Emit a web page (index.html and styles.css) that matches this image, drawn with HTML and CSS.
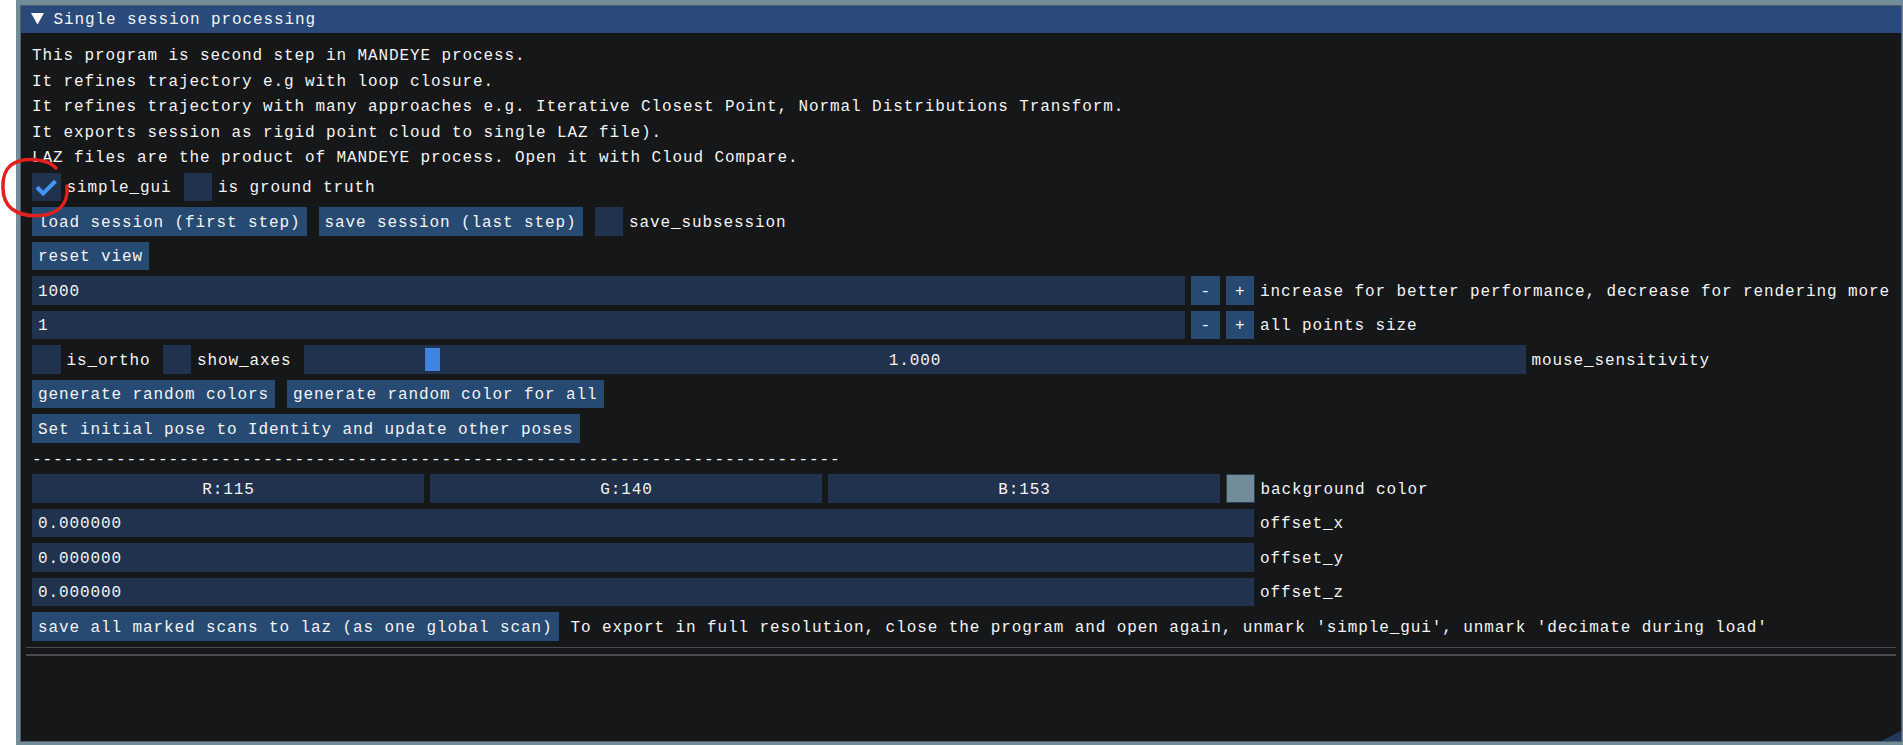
FILE: index.html
```html
<!DOCTYPE html>
<html lang="en">
<head>
<meta charset="utf-8">
<title>Single session processing</title>
<link rel="stylesheet" href="styles.css">
</head>
<body>
<div class="screen">
  <div class="gutter"></div>
  <div class="desktop">
    <div class="window">
      <div class="titlebar">
        <svg class="arrow" viewBox="0 0 13 12" width="13" height="12"><polygon points="0,0 13,0 6.5,11.5" fill="#ffffff"/></svg>
        <span class="title">Single session processing</span>
      </div>
      <div class="content">
        <div class="text">This program is second step in MANDEYE process.</div>
        <div class="text">It refines trajectory e.g with loop closure.</div>
        <div class="text">It refines trajectory with many approaches e.g. Iterative Closest Point, Normal Distributions Transform.</div>
        <div class="text">It exports session as rigid point cloud to single LAZ file).</div>
        <div class="text">LAZ files are the product of MANDEYE process. Open it with Cloud Compare.</div>

        <div class="row">
          <div class="item">
            <span class="check"><svg viewBox="0 0 28.5 28.5" width="28.5" height="28.5"><polyline points="5.03,14.25 11.18,20.4 23.48,8.1" fill="none" stroke="#4296fa" stroke-width="4.1"/></svg></span>
            <span class="label">simple_gui</span>
          </div>
          <div class="item">
            <span class="check"></span>
            <span class="label">is ground truth</span>
          </div>
        </div>

        <div class="row">
          <span class="btn">load session (first step)</span>
          <span class="btn">save session (last step)</span>
          <div class="item">
            <span class="check"></span>
            <span class="label">save_subsession</span>
          </div>
        </div>

        <div class="row">
          <span class="btn">reset view</span>
        </div>

        <div class="row tight">
          <span class="field int">1000</span>
          <span class="btn sq">-</span>
          <span class="btn sq">+</span>
          <span class="label">increase for better performance, decrease for rendering more</span>
        </div>

        <div class="row tight">
          <span class="field int">1</span>
          <span class="btn sq">-</span>
          <span class="btn sq">+</span>
          <span class="label">all points size</span>
        </div>

        <div class="row">
          <div class="item">
            <span class="check"></span>
            <span class="label">is_ortho</span>
          </div>
          <div class="item">
            <span class="check"></span>
            <span class="label">show_axes</span>
          </div>
          <div class="item">
            <span class="slider"><span class="grab"></span><span class="slider-value">1.000</span></span>
            <span class="label">mouse_sensitivity</span>
          </div>
        </div>

        <div class="row">
          <span class="btn">generate random colors</span>
          <span class="btn">generate random color for all</span>
        </div>

        <div class="row">
          <span class="btn">Set initial pose to Identity and update other poses</span>
        </div>

        <div class="text">-----------------------------------------------------------------------------</div>

        <div class="row tight">
          <span class="field comp">R:115</span>
          <span class="field comp">G:140</span>
          <span class="field comp">B:153</span>
          <span class="swatch"></span>
          <span class="label">background color</span>
        </div>

        <div class="row tight">
          <span class="field wide">0.000000</span>
          <span class="label">offset_x</span>
        </div>
        <div class="row tight">
          <span class="field wide">0.000000</span>
          <span class="label">offset_y</span>
        </div>
        <div class="row tight">
          <span class="field wide">0.000000</span>
          <span class="label">offset_z</span>
        </div>

        <div class="row">
          <span class="btn">save all marked scans to laz (as one global scan)</span>
          <span class="label">To export in full resolution, close the program and open again, unmark 'simple_gui', unmark 'decimate during load'</span>
        </div>

        <div class="sep"></div>
        <div class="sep"></div>
      </div>
      <div class="grip"></div>
    </div>
  </div>
  <svg class="annotation" width="1903" height="745" viewBox="0 0 1903 745">
    <path d="M 56 168 C 48 159, 24 156, 11 165 C 0 174, 0 200, 12 209 C 24 218, 48 218, 59 209 C 66 203, 68 195, 67 186" fill="none" stroke="#e3201b" stroke-width="3.5" stroke-linecap="round" stroke-linejoin="round"/>
  </svg>
</div>
</body>
</html>
```

FILE: styles.css
```css
* {
  box-sizing: border-box;
}

html,
body {
  margin: 0;
  padding: 0;
  background: #ffffff;
}

body {
  width: 1903px;
  height: 745px;
  overflow: hidden;
  font-family: "Liberation Mono", "DejaVu Sans Mono", monospace;
  font-size: 16px;
  letter-spacing: 0.9px;
  line-height: 23.5px;
  color: #f4f4f4;
}

.screen {
  position: relative;
  display: flex;
  width: 1903px;
  height: 745px;
}

.gutter {
  flex: none;
  width: 16px;
  background: #ffffff;
}

.desktop {
  flex: 1;
  background: #738c99;
  padding: 4.5px 2px 3px 4px;
}

.window {
  position: relative;
  height: 100%;
  border: 1px solid #525c66;
  background: #151719;
  display: flex;
  flex-direction: column;
  overflow: hidden;
}

.titlebar {
  flex: none;
  height: 28.5px;
  margin: -1px -1px 0;
  background: #294a7a;
  display: flex;
  align-items: center;
  gap: 10px;
  padding-left: 10.5px;
  white-space: pre;
}

.title {
  height: 19.5px;
}

.arrow {
  display: block;
  flex: none;
}

.content {
  padding: 12px 11px 0;
  display: flex;
  flex-direction: column;
  gap: 6px;
}

.text {
  height: 19.5px;
  white-space: pre;
}

.row {
  height: 28.5px;
  display: flex;
  align-items: center;
  gap: 12px;
  white-space: pre;
}

.row.tight {
  gap: 6px;
}

.item {
  display: flex;
  align-items: center;
  gap: 6px;
}

.label {
  flex: none;
  height: 19.5px;
}

.check {
  flex: none;
  width: 28.5px;
  height: 28.5px;
  background: #20324d;
}

.check svg {
  display: block;
}

.btn {
  flex: none;
  height: 28.5px;
  padding: 4.5px 6px;
  background: #274a72;
  overflow: hidden;
}

.btn.sq {
  width: 28.5px;
  padding: 4.5px 0 4.5px 0.9px;
  text-align: center;
}

.field {
  flex: none;
  height: 28.5px;
  padding: 4.5px 6px;
  background: #20324d;
  overflow: hidden;
}

.field.int {
  width: 1153px;
}

.field.wide {
  width: 1222px;
}

.field.comp {
  width: 392px;
  text-align: center;
  padding-left: 6.9px;
}

.swatch {
  flex: none;
  width: 28.5px;
  height: 28.5px;
  background: #738c99;
  border: 1.5px solid #2b3f58;
}

.slider {
  position: relative;
  flex: none;
  width: 1222px;
  height: 28.5px;
  padding: 4.5px 0 4.5px 0.9px;
  background: #20324d;
  text-align: center;
  overflow: hidden;
}

.grab {
  position: absolute;
  left: 121.5px;
  top: 3px;
  width: 15px;
  height: 22.5px;
  background: #3d85e0;
}

.slider-value {
  position: relative;
}

.sep {
  height: 1.5px;
  margin: 0 -6px;
  background: #4a4b53;
}

.grip {
  position: absolute;
  right: 0;
  bottom: 0;
  width: 20px;
  height: 10px;
  background: #203a5c;
  clip-path: polygon(100% 0, 100% 100%, 0 100%);
}

.annotation {
  position: absolute;
  left: 0;
  top: 0;
  pointer-events: none;
}
```
